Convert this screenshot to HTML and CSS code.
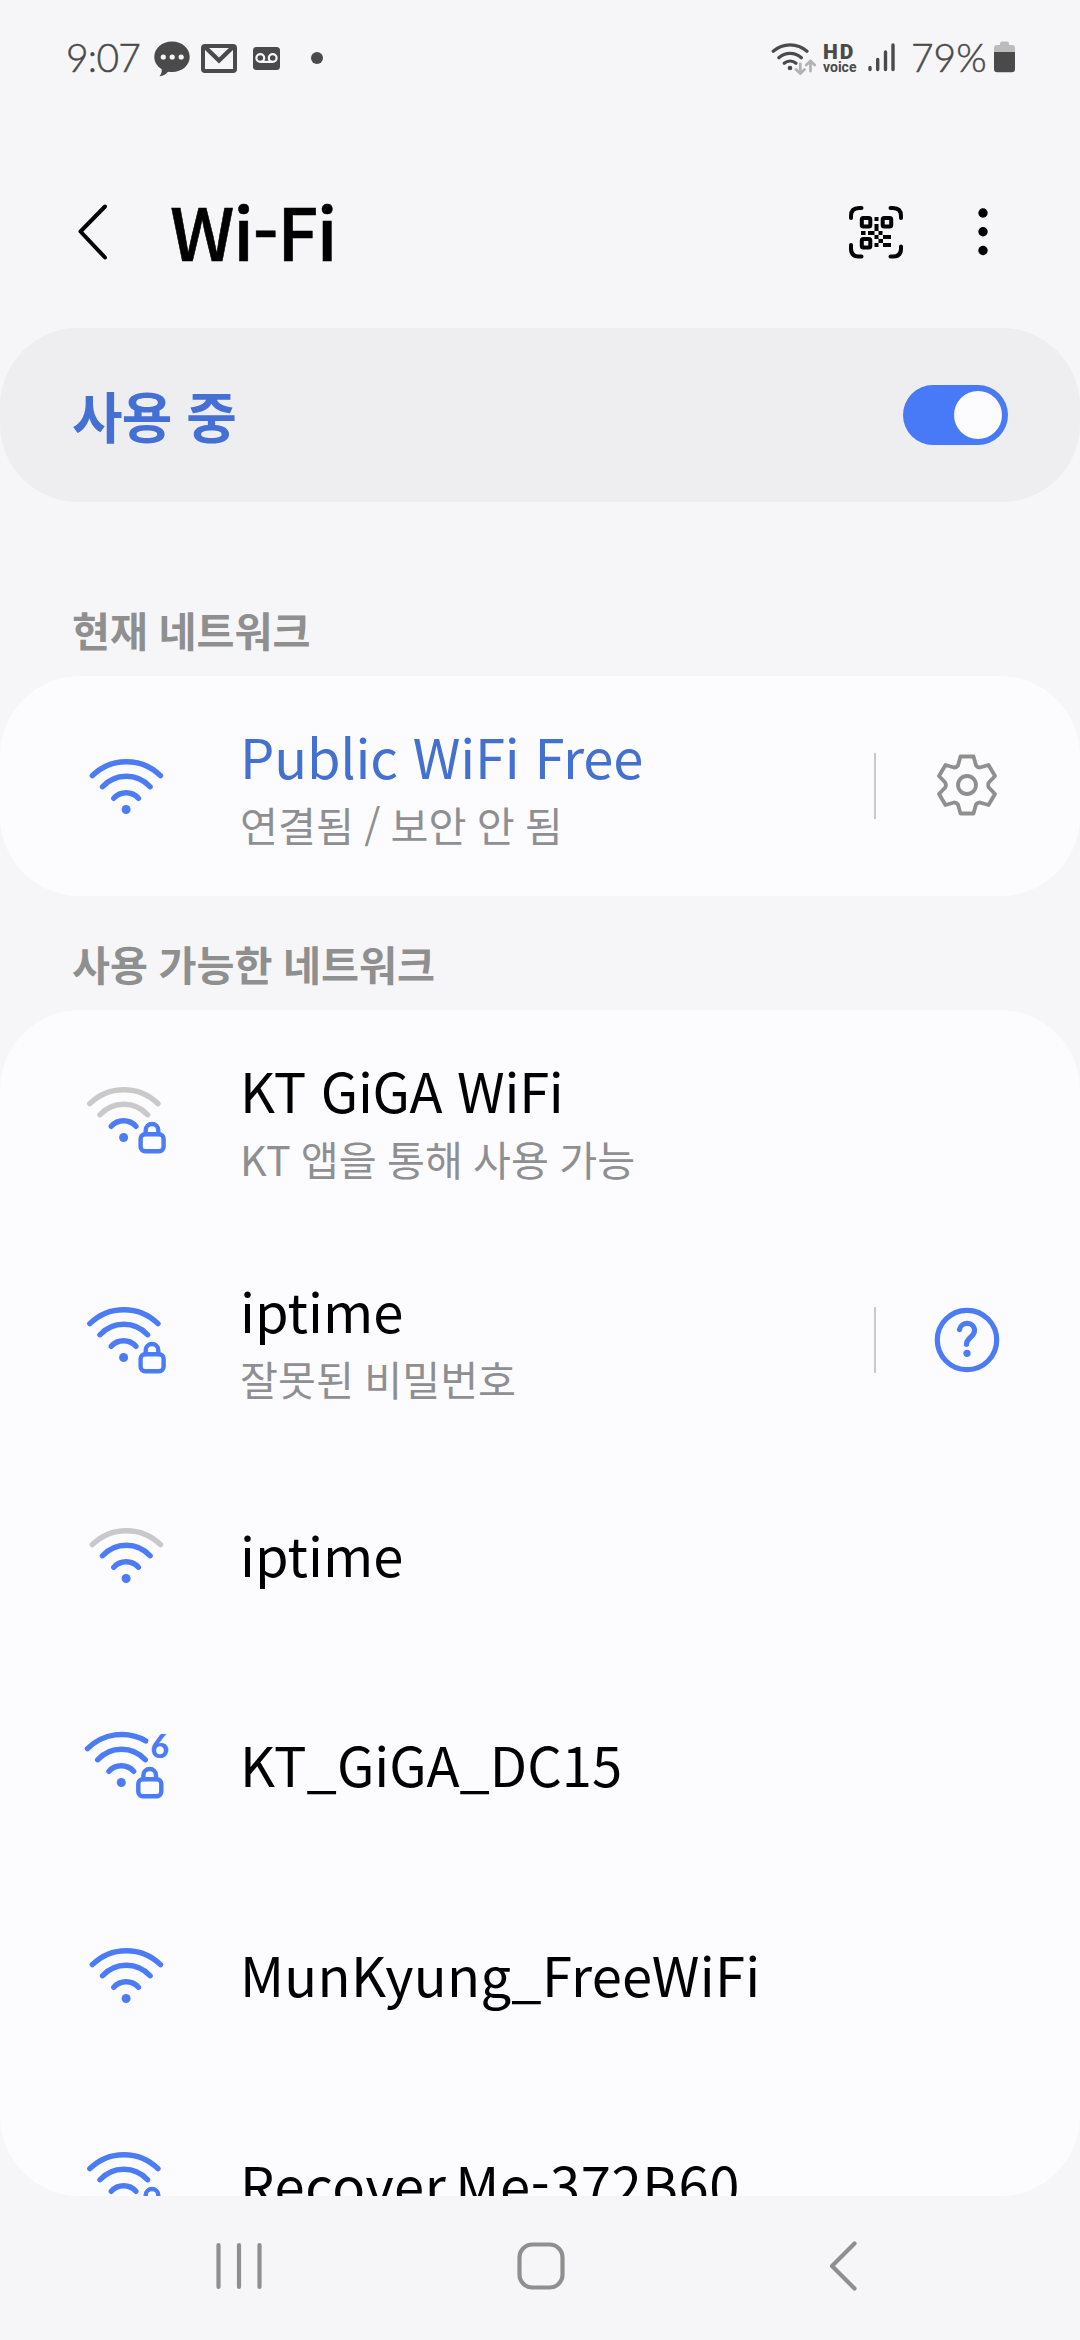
FILE: index.html
```html
<!DOCTYPE html>
<html lang="ko">
<head>
<meta charset="utf-8">
<title>Wi-Fi</title>
<link rel="stylesheet" href="styles.css">
</head>
<body>
<svg class="defs" aria-hidden="true">
  <defs>
    <path id="arc-outer" d="M8.8 19.7A48.5 48.5 0 0 1 77 19.7"/>
    <path id="arc-cut" d="M8.8 19.7A48.5 48.5 0 0 1 67 11.8"/>
    <path id="arc-mid" d="M19 30.7A32.2 32.2 0 0 1 66.6 30.7"/>
    <path id="arc-inner" d="M30.3 42.3A16.5 16.5 0 0 1 54.9 42.3"/>
    <circle id="dot" cx="42.6" cy="53.5" r="4.5"/>
    <g id="lock">
      <path d="M64.7 50V46.3a6.3 6.3 0 0 1 12.6 0V50"/>
      <rect x="59.6" y="50.3" width="23" height="17" rx="4.5"/>
    </g>
  </defs>
</svg>
<div class="phone">
  <header class="status">
    <div class="status-left">
      <span class="clock">9:07</span>
      <svg class="ic-chat" width="36" height="36" viewBox="0 0 36 36"><path fill="#4a4a4a" d="M18 .5C8 .5.3 7.2.3 15.8c0 5.500 3 9.800 7.400 12.400C8 31 7.200 33 5.500 35.200c4-.6 6.500-2 8.500-4.500 1.300.2 2.600.4 4 .4 10 0 17.700-6.700 17.700-15.300S28 .5 18 .5Z"/><g fill="#f6f6f8"><circle cx="9.300" cy="16" r="2.600"/><circle cx="18.200" cy="16" r="2.600"/><circle cx="27.200" cy="16" r="2.600"/></g></svg>
      <svg class="ic-mail" width="36" height="29" viewBox="0 0 36 29"><rect x="2" y="2" width="32" height="25" rx="2" fill="none" stroke="#4a4a4a" stroke-width="4"/><path d="M4.500 3.500 18 16.500 31.500 3.500" fill="none" stroke="#4a4a4a" stroke-width="4.400"/></svg>
      <svg class="ic-vm" width="27" height="23" viewBox="0 0 27 23"><rect width="27" height="23" rx="3.500" fill="#4a4a4a"/><g fill="none" stroke="#f6f6f8" stroke-width="2.200"><circle cx="7.300" cy="11" r="3.900"/><circle cx="19.700" cy="11" r="3.900"/><path d="M7.300 14.900H19.700"/></g></svg>
      <svg class="ic-dot" width="12" height="12" viewBox="0 0 12 12"><circle cx="6" cy="6" r="6" fill="#4a4a4a"/></svg>
    </div>
    <div class="status-right">
      <svg width="46" height="34" viewBox="0 0 46 34" fill="none" stroke-linecap="round"><g stroke="#4a4a4a" stroke-width="3.200"><path d="M2.200 10.300A25.500 25.500 0 0 1 36 10.300"/><path d="M7.800 16.700A17 17 0 0 1 30.400 16.700"/><path d="M13.200 22.200A9 9 0 0 1 25 22.200"/></g><circle cx="19" cy="27" r="2.300" fill="#4a4a4a"/><g stroke="#b3b3b3" stroke-width="2.800"><path d="M29.300 23V32M25 28.500 29.300 32.500 33.500 28.500M39.500 30V20.500M35.300 24 39.500 20 43.700 24"/></g></svg>
      <div class="hd"><b>HD</b><span>voice</span></div>
      <svg class="ic-signal" width="28" height="32" viewBox="0 0 28 32" stroke="#4a4a4a" stroke-width="3.400" stroke-linecap="round"><path d="M2 26.500V28.500M9.700 18.500V28.500M17.500 11V28.500M25 4V28.500"/></svg>
      <span class="percent">79%</span>
      <svg class="ic-batt" width="21" height="32" viewBox="0 0 21 32"><path fill="#bcbcbc" d="M6 2.500Q6 .5 8 .5h5q2 0 2 2V4h3q3 0 3 3v5H0V7q0-3 3-3h3Z"/><path fill="#4a4a4a" d="M0 11h21v17q0 3.300-3.300 3.300H3.300Q0 31.300 0 28Z"/></svg>
    </div>
  </header>

  <div class="appbar">
    <svg class="back" width="34" height="60" viewBox="0 0 34 60"><path d="M31 4.500 6.500 29.500 31 55.500" fill="none" stroke="#000" stroke-width="4" stroke-linecap="round" stroke-linejoin="round"/></svg>
    <h1>Wi-Fi</h1>
    <svg class="qr" width="54" height="53" viewBox="0 0 54 53"><g fill="none" stroke="#000" stroke-width="4" stroke-linecap="round"><path d="M2 12V10Q2 2 10 2H12.500M41.500 2H44Q52 2 52 10V12M52 40.500V42.500Q52 50.500 44 50.500H41.500M12.500 50.500H10Q2 50.500 2 42.500V39"/><rect x="12.800" y="12" width="8.500" height="8.500" rx="1.500"/><rect x="33.700" y="12" width="8.500" height="8.500" rx="1.500"/><rect x="12.800" y="33" width="8.500" height="8.500" rx="1.500"/></g><path d="M25.500 11h4v4h-4zM25.500 18h4v7h-4zM12 25h4.500v4H12zM19 25h6.500v4H19zM29.500 25h4v4h-4zM25.500 29h4v4h-4zM34 29h8v4h-8zM29.500 33h4.500v4h-4.500zM25.500 37h4v4h-4zM34 37h8v4h-8z"/></svg>
    <svg class="more" width="10" height="48" viewBox="0 0 10 48"><circle cx="5" cy="5" r="4.700"/><circle cx="5" cy="23.800" r="4.700"/><circle cx="5" cy="42.500" r="4.700"/></svg>
  </div>

  <section class="master">
    <span class="state">사용 중</span>
    <div class="switch"><div class="knob"></div></div>
  </section>

  <h2 class="current">현재 네트워크</h2>
  <section class="card">
    <div class="row tall">
      <svg class="wifi" viewBox="0 0 90 72"><g transform="translate(2.500 6)"><use href="#arc-outer"/><use href="#arc-mid"/><use href="#arc-inner"/><use href="#dot" class="fill"/></g></svg>
      <div class="label"><div class="name on">Public WiFi Free</div><div class="sub">연결됨 / 보안 안 됨</div></div>
      <div class="action"><svg width="60" height="64" viewBox="-30 -31 60 64" fill="none" stroke="#8f8f8f" stroke-width="3.800" stroke-linejoin="round"><path d="M-6.500 -28.500H6.500L9 -19.500Q10.500 -17.500 13 -17.500L21.500 -20 28 -9 21.800 -2.500Q20.500 0 21.800 2.500L28 9 21.500 20 13 17.500Q10.500 17.500 9 19.500L6.500 28.500H-6.500L-9 19.500Q-10.500 17.500 -13 17.500L-21.500 20 -28 9 -21.800 2.500Q-20.500 0 -21.800 -2.500L-28 -9 -21.500 -20 -13 -17.500Q-10.500 -17.500 -9 -19.500Z"/><circle r="9"/></svg></div>
    </div>
  </section>

  <h2>사용 가능한 네트워크</h2>
  <section class="card list">
    <div class="row tall">
      <svg class="wifi" viewBox="0 0 90 72"><use href="#arc-outer" class="off"/><use href="#arc-mid" class="off"/><use href="#arc-inner"/><use href="#dot" class="fill"/><use href="#lock" class="lk"/></svg>
      <div class="label"><div class="name tight">KT GiGA WiFi</div><div class="sub">KT 앱을 통해 사용 가능</div></div>
    </div>
    <div class="row tall">
      <svg class="wifi" viewBox="0 0 90 72"><use href="#arc-outer"/><use href="#arc-mid"/><use href="#arc-inner"/><use href="#dot" class="fill"/><use href="#lock" class="lk"/></svg>
      <div class="label"><div class="name">iptime</div><div class="sub">잘못된 비밀번호</div></div>
      <div class="action"><svg width="66" height="66" viewBox="-33 -33 66 66" fill="none" stroke="#4b7bf5" stroke-width="5.200" stroke-linecap="round"><circle r="29.700"/><path d="M-7.500 -10.500C-6 -19 7.500 -18.500 7.500 -9.500C7.500 -3 -.5 -2.500 -.5 4.300"/><circle cy="13.300" r="3.600" fill="#4b7bf5" stroke="none"/></svg></div>
    </div>
    <div class="row">
      <svg class="wifi" viewBox="0 0 90 72"><g transform="translate(2.500 6)"><use href="#arc-outer" class="off"/><use href="#arc-mid"/><use href="#arc-inner"/><use href="#dot" class="fill"/></g></svg>
      <div class="label"><div class="name">iptime</div></div>
    </div>
    <div class="row">
      <svg class="wifi" viewBox="0 0 90 72"><g transform="translate(-2.300 0)"><use href="#arc-cut"/><use href="#arc-mid"/><use href="#arc-inner"/><use href="#dot" class="fill"/><use href="#lock" class="lk"/></g><text x="69.500" y="28.800">6</text></svg>
      <div class="label"><div class="name">KT_GiGA_DC15</div></div>
    </div>
    <div class="row">
      <svg class="wifi" viewBox="0 0 90 72"><g transform="translate(2.500 6)"><use href="#arc-outer"/><use href="#arc-mid"/><use href="#arc-inner"/><use href="#dot" class="fill"/></g></svg>
      <div class="label"><div class="name wide">MunKyung_FreeWiFi</div></div>
    </div>
    <div class="row">
      <svg class="wifi" viewBox="0 0 90 72"><use href="#arc-outer"/><use href="#arc-mid"/><use href="#arc-inner"/><use href="#dot" class="fill"/><use href="#lock" class="lk"/></svg>
      <div class="label"><div class="name close">Recover Me-372B60</div></div>
    </div>
  </section>

  <nav class="navbar">
    <svg width="46" height="50" viewBox="0 0 46 50"><path d="M2.500 4V46M23 4V46M43.500 4V46"/></svg>
    <svg width="50" height="50" viewBox="0 0 50 50"><rect x="3.500" y="3.500" width="43" height="43" rx="13"/></svg>
    <svg width="46" height="50" viewBox="0 0 46 50"><path d="M35.500 2.500 13 25 35.500 47.500"/></svg>
  </nav>
</div>
</body>
</html>
```
FILE: styles.css
```css
* { box-sizing: border-box; }

body {
  margin: 0;
  background: #f6f6f8;
  font-family: "Noto Sans CJK KR", "Noto Sans", sans-serif;
  color: #000;
}

.defs { position: absolute; width: 0; height: 0; }

svg { display: block; flex: none; }

.phone {
  width: 1080px;
  height: 2340px;
  display: flex;
  flex-direction: column;
  overflow: hidden;
}

/* Status bar */
.status {
  flex: none;
  height: 136px;
  padding: 41px 65px 0 66px;
  display: flex;
  justify-content: space-between;
  font-family: Lato, sans-serif;
  color: #4a4a4a;
}

.status-left, .status-right {
  display: flex;
  align-items: flex-start;
}

.clock, .percent {
  font-size: 39px;
  font-weight: 300;
  line-height: 32px;
  letter-spacing: -0.8px;
  -webkit-text-stroke: 0.5px #4a4a4a;
}

.clock { width: 88px; }
.percent { width: 83px; margin-left: 15px; letter-spacing: 0; }
.ic-mail { margin: 3px 0 0 11px; }
.ic-vm { margin: 6px 0 0 16px; }
.ic-dot { margin: 11px 0 0 31px; }

.hd {
  display: flex;
  flex-direction: column;
  width: 34px;
  margin: 2px 0 0 6px;
  font-family: Roboto, sans-serif;
}

.hd b { font-size: 21px; font-weight: 900; line-height: 18px; letter-spacing: 2px; }
.hd span { font-size: 14px; font-weight: 700; line-height: 13px; }
.ic-signal { margin-left: 11px; }

/* Title bar */
.appbar {
  flex: none;
  height: 192px;
  padding: 0 92px 0 74px;
  display: flex;
  align-items: center;
}

.appbar h1 {
  flex: 1;
  margin: 0 0 5px 62px;
  font-size: 72px;
  font-weight: 500;
  line-height: 90px;
  letter-spacing: -1.2px;
  -webkit-text-stroke: 0.6px #000;
}

.qr { margin-right: 75px; }

/* Main switch */
.master {
  flex: none;
  height: 174px;
  padding: 0 72px;
  border-radius: 78px;
  background: #eeeef0;
  display: flex;
  align-items: center;
  justify-content: space-between;
  color: #4470d6;
  font-size: 55px;
  font-weight: 700;
}

.state { padding-bottom: 3px; letter-spacing: -0.8px; }

.switch {
  width: 105px;
  height: 60px;
  padding: 6px;
  border-radius: 30px;
  background: #4879f6;
  display: flex;
  justify-content: flex-end;
}

.knob { width: 48px; height: 48px; border-radius: 50%; background: #fcfcff; }

h2 {
  flex: none;
  height: 114px;
  margin: 0;
  padding: 31px 72px 0;
  font-size: 41.3px;
  font-weight: 700;
  line-height: 72px;
  word-spacing: -1px;
  color: #8f8f8f;
}

h2.current { height: 174px; padding-top: 91px; }

/* Network lists */
.card {
  flex: none;
  border-radius: 80px;
  background: #fcfcff;
  overflow: hidden;
}

.card.list { height: 1186px; }

.row {
  height: 210px;
  padding: 0 84px 0 81px;
  display: flex;
  align-items: center;
}

.row.tall { height: 220px; }

.wifi {
  width: 90px;
  height: 72px;
  fill: none;
  stroke: #4b7bf5;
  stroke-width: 5.4;
  stroke-linecap: round;
  overflow: visible;
}

.wifi .off { stroke: #c9c9c9; }
.wifi .fill { fill: #4b7bf5; stroke: none; }
.wifi .lk { stroke-width: 4.4; }
.wifi text { fill: #4b7bf5; stroke: none; font: 900 32px Lato, sans-serif; }

.label { flex: 1; margin-left: 69px; padding-bottom: 3px; white-space: nowrap; }
.tall .label { padding: 10px 0 0; }
.name { font-size: 54.3px; line-height: 66px; }
.name.on { color: #4470d0; letter-spacing: -0.2px; }
.name.tight { letter-spacing: -0.3px; }
.name.wide { letter-spacing: 0.28px; }
.name.close { letter-spacing: 0.6px; word-spacing: -7px; }
.sub { font-size: 41.3px; line-height: 70px; word-spacing: -1.4px; color: #8f8f91; }

.action {
  display: flex;
  align-items: center;
  justify-content: center;
  width: 122px;
  height: 66px;
  padding-left: 61px;
  border-left: 2px solid #c9c9cc;
}

/* Navigation bar */
.navbar {
  flex: 1;
  padding: 0 215px 5px 216px;
  display: flex;
  align-items: center;
  justify-content: space-between;
  fill: none;
  stroke: #8f8f8f;
  stroke-width: 4.2;
  stroke-linecap: round;
  stroke-linejoin: round;
}
```
